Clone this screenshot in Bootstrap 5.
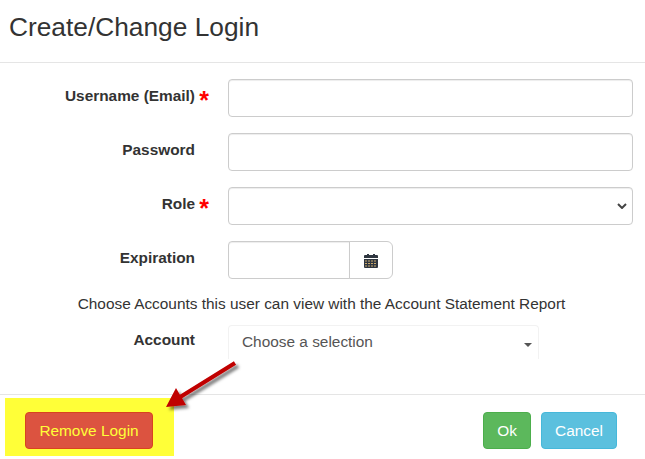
<!DOCTYPE html>
<html lang="en">
<head>
    <meta charset="UTF-8">
    <meta name="viewport" content="width=device-width, initial-scale=1">
    <title>Create/Change Login</title>
    <link rel="stylesheet" href="https://cdn.jsdelivr.net/npm/bootstrap@5.3.0/dist/css/bootstrap.min.css">
    <style>
        body {
            background-color: #ffffff;
            color: #333333;
            font-family: "Liberation Sans", Arial, sans-serif;
            font-size: 15.4px;
            width: 645px;
            height: 459px;
            overflow: hidden;
        }

        .login-dialog {
            position: relative;
            height: 459px;
        }

        .login-head {
            height: 63px;
            padding: 12px 9px 0;
            border-bottom: 1px solid #e5e5e5;
        }

        .login-head h4 {
            font-size: 26.3px;
            font-weight: 400;
            line-height: 30px;
            margin: 0;
        }

        .login-body {
            height: 331px;
            padding: 16px 12px 0 0;
        }

        .field-row {
            display: flex;
            margin-bottom: 16px;
        }

        .field-label {
            width: 228px;
            flex: none;
            padding: 8px 33px 0 0;
            text-align: right;
            font-weight: 700;
            line-height: 18px;
            position: relative;
            margin: 0;
        }

        .account-label {
            padding-top: 6px;
        }

        .req-star {
            position: absolute;
            right: 19px;
            top: 9px;
            color: #ff0000;
            font-size: 25px;
            line-height: 25px;
            font-weight: 700;
        }

        .field-input {
            height: 38px;
            border-color: #cccccc;
            border-radius: 4px;
            box-shadow: inset 0 1px 1px rgba(0, 0, 0, .075);
            font-size: 15.4px;
        }

        select.field-input {
            background-image: url("data:image/svg+xml,%3csvg xmlns='http://www.w3.org/2000/svg' viewBox='0 0 10 6'%3e%3cpath fill='none' stroke='%23444444' stroke-width='2' d='M1 1l4 4 4-4'/%3e%3c/svg%3e");
            background-position: right 5px center;
            background-size: 10px 6px;
        }

        .date-group {
            width: 165px;
        }

        .date-group .input-group-text {
            width: 44px;
            justify-content: center;
            background-color: #ffffff;
            border-color: #cccccc;
            padding: 0;
        }

        .accounts-note {
            text-align: center;
            margin: -1px 0 11px 10px;
            line-height: 20px;
        }

        .chosen-box {
            width: 311px;
            height: 34px;
            padding: 0 13px;
            border: 1px solid #f2f2f2;
            border-bottom: 0;
            border-radius: 4px 4px 0 0;
            color: #555555;
            line-height: 32px;
            position: relative;
        }

        .chosen-box::after {
            content: "";
            position: absolute;
            right: 6px;
            top: 17px;
            border-left: 4px solid transparent;
            border-right: 4px solid transparent;
            border-top: 4px solid #555555;
        }

        .login-foot {
            height: 65px;
            border-top: 1px solid #e5e5e5;
            padding: 3px 28px 0 5px;
        }

        .remove-zone {
            width: 169px;
            height: 58px;
            padding: 14px 0 0 20px;
            background-color: #ffff38;
        }

        .foot-actions {
            gap: 10px;
        }

        .foot-btn {
            height: 37px;
            font-size: 15.4px;
            line-height: 20px;
            padding: 0;
            border-radius: 4px;
            color: #ffffff;
        }

        .btn-remove {
            width: 128px;
            background-color: #dc5340;
            border: 1px solid #d9431f;
            color: #ffff38;
        }

        .btn-okay {
            width: 48px;
            background-color: #5cb85c;
            border: 1px solid #4cae4c;
            margin-top: 14px;
        }

        .btn-cancel {
            width: 76px;
            background-color: #5bc0de;
            border: 1px solid #46b8da;
            margin-top: 14px;
        }

        .callout-arrow {
            position: absolute;
            left: 155px;
            top: 355px;
        }
    </style>
</head>
<body>

<div class="login-dialog">
    <div class="login-head">
        <h4>Create/Change Login</h4>
    </div>

    <div class="login-body">
        <div class="field-row">
            <label class="field-label" for="username">Username (Email)<span class="req-star">*</span></label>
            <input type="text" class="form-control field-input" id="username">
        </div>
        <div class="field-row">
            <label class="field-label" for="password">Password</label>
            <input type="password" class="form-control field-input" id="password">
        </div>
        <div class="field-row">
            <label class="field-label" for="role">Role<span class="req-star">*</span></label>
            <select class="form-select field-input" id="role"></select>
        </div>
        <div class="field-row">
            <label class="field-label" for="expiration">Expiration</label>
            <div class="input-group date-group">
                <input type="text" class="form-control field-input" id="expiration">
                <span class="input-group-text">
                    <svg width="14" height="15" viewBox="0 0 14 15">
                        <path fill="#2f3640" d="M1 2h2V1h2v1h4V1h2v1h2a1 1 0 0 1 1 1v2H0V3a1 1 0 0 1 1-1z"/>
                        <path fill="#2f3640" d="M0 6h14v8a1 1 0 0 1-1 1H1a1 1 0 0 1-1-1z"/>
                        <path stroke="#c9a86a" stroke-width="1" stroke-dasharray="2 1" d="M1 8h12M1 10.5h12M1 13h12"/>
                    </svg>
                </span>
            </div>
        </div>
        <p class="accounts-note">Choose Accounts this user can view with the Account Statement Report</p>
        <div class="field-row">
            <label class="field-label account-label" for="account">Account</label>
            <div class="chosen-box" id="account">Choose a selection</div>
        </div>
    </div>

    <div class="login-foot d-flex justify-content-between">
        <div class="remove-zone">
            <button type="button" class="btn foot-btn btn-remove">Remove Login</button>
        </div>
        <div class="d-flex foot-actions">
            <button type="button" class="btn foot-btn btn-okay">Ok</button>
            <button type="button" class="btn foot-btn btn-cancel">Cancel</button>
        </div>
    </div>

    <svg class="callout-arrow" width="95" height="65" viewBox="0 0 95 65">
        <defs>
            <filter id="arrowShade" x="-20%" y="-20%" width="150%" height="150%">
                <feDropShadow dx="3" dy="3" stdDeviation="1.5" flood-color="#000000" flood-opacity=".5"/>
            </filter>
        </defs>
        <path fill="#c00000" filter="url(#arrowShade)" d="M78.9 6.3l2.2 3.4-54 33.5 3.9 6.8-20 2 10-19 3.9 6.8z"/>
    </svg>
</div>

<script src="https://cdn.jsdelivr.net/npm/bootstrap@5.3.0/dist/js/bootstrap.bundle.min.js"></script>
</body>
</html>
